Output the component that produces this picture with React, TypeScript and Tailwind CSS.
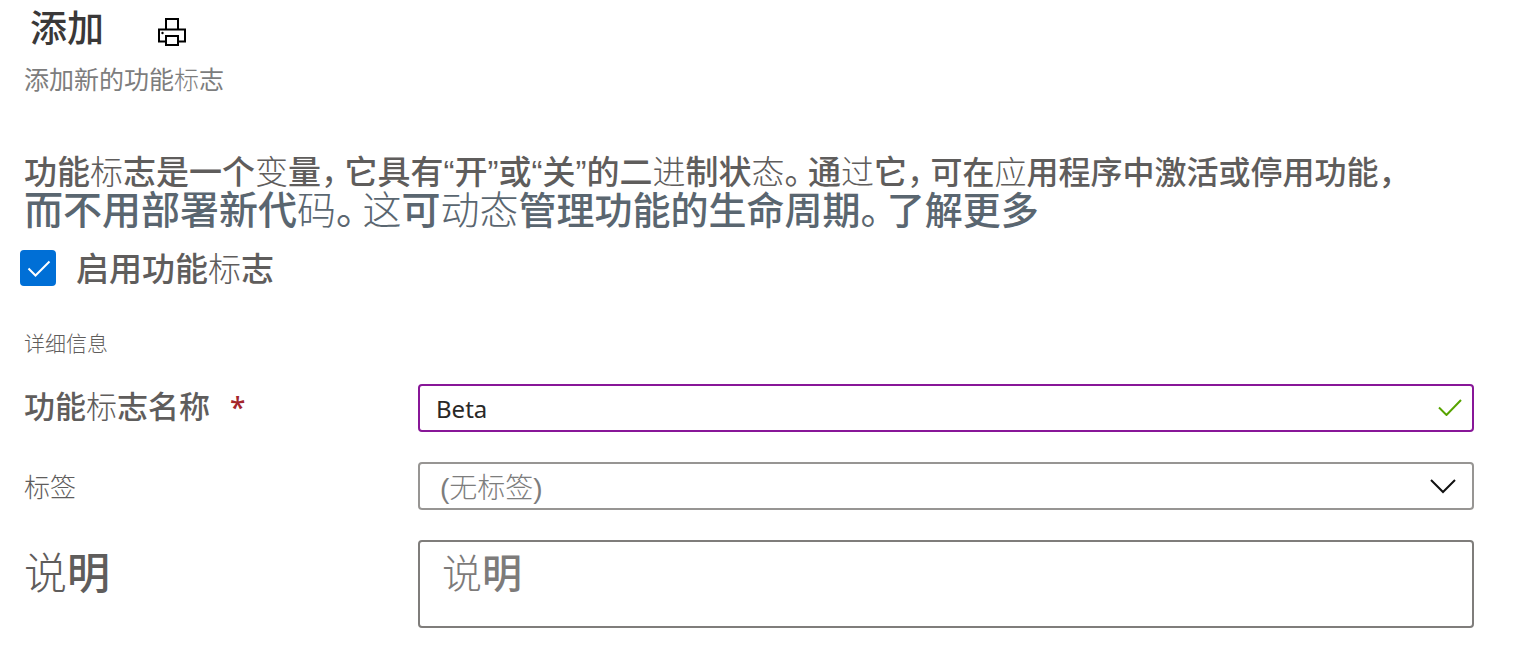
import type { ReactNode } from 'react';

const Light = ({ children }: { children: ReactNode }) => <span className="font-light">{children}</span>;

/* Full-width punctuation set tighter than the characters around it. */
const Mark = ({ children }: { children: ReactNode }) => (
  <span className="mr-[7px] font-normal [font-feature-settings:'halt']">{children}</span>
);

const PrinterIcon = () => (
  <svg viewBox="0 0 28 28" className="size-7" fill="none" stroke="#000" strokeWidth="2" aria-hidden="true">
    <path d="M8 11V1h12v10" />
    <path d="M8 23.500H1V11.500h26v12h-7" />
    <path d="M8 18h12v9H8z" />
    <circle cx="4.500" cy="15" r="1.200" fill="#000" stroke="none" />
  </svg>
);

export default function App() {
  return (
    <main className="min-h-screen bg-white pr-10 pb-6 pl-6 font-['Liberation_Sans','Noto_Sans_CJK_SC',sans-serif] font-medium text-[#5f5d5c]">
      <header>
        <div className="flex items-center gap-[54px] pl-1.5">
          <h1 className="text-[37px] leading-[60px] text-[#3a3838]">添加</h1>
          <button type="button" aria-label="打印" className="mt-1">
            <PrinterIcon />
          </button>
        </div>
        <p className="text-[25px] leading-10 font-normal text-[#7d7d7d]">
          添加新的功能<Light>标</Light>志
        </p>
      </header>

      <div className="mt-[54px]">
        <p className="text-[33px] leading-[37px]">
          功能<Light>标</Light>志是一个<Light>变</Light>量<Mark>，</Mark>它具有“开”或“关”的二<Light>进</Light>制状
          <Light>态</Light>
          <Mark>。</Mark>通<Light>过</Light>它<Mark>，</Mark>
          <span className="text-[32px]">
            可在<Light>应</Light>用程序中激活或停用功能，
          </span>
        </p>
        <p className="text-[38px] leading-[37px] text-[#5a6670]">
          <span className="text-[39px]">
            而不用部署新代<Light>码</Light>
            <Mark>。</Mark>
            <Light>这</Light>可<Light>动态</Light>
          </span>
          管理功能的生命周期<Mark>。</Mark>
          <a href="#learn-more">了解更多</a>
        </p>
      </div>

      <form>
        <div className="mt-[18px] -ml-1 flex items-center gap-5">
          <input
            id="enabled"
            type="checkbox"
            defaultChecked
            className="size-9 shrink-0 appearance-none rounded-sm border-2 border-[#006fd6] bg-white bg-center bg-no-repeat checked:bg-[#006fd6] checked:bg-[url('data:image/svg+xml,%3Csvg%20xmlns=%22http://www.w3.org/2000/svg%22%20width=%2232%22%20height=%2232%22%3E%3Cpath%20d=%22M6.500%2016.500l7%207L27.500%209.500%22%20fill=%22none%22%20stroke=%22white%22%20stroke-width=%222%22/%3E%3C/svg%3E')]"
          />
          <label htmlFor="enabled" className="pt-1 text-[33px] leading-9">
            启用功能<Light>标</Light>志
          </label>
        </div>

        <h2 className="mt-[42px] text-[21px] leading-7 font-light">详细信息</h2>

        <div className="mt-[26px] grid grid-cols-[394px_1fr] gap-y-[30px]">
          <label htmlFor="name" className="text-[31px] leading-12">
            功能<Light>标</Light>志名称
            <span className="ml-5 font-['Noto_Sans',sans-serif] text-[28px] leading-none text-[#a4262c]">*</span>
          </label>
          <div className="relative h-12">
            <input
              id="name"
              defaultValue="Beta"
              className="block h-12 w-full rounded-sm border-2 border-[#881798] px-4 font-['Noto_Sans',sans-serif] text-2xl font-normal text-[#292827] outline-none"
            />
            <svg
              viewBox="0 0 24 18"
              className="pointer-events-none absolute top-3.5 right-3 h-[18px] w-6"
              fill="none"
              stroke="#57a300"
              strokeWidth="2"
              aria-hidden="true"
            >
              <path d="M1 9.500l7.500 7.500L23 2" />
            </svg>
          </div>

          <label htmlFor="label" className="pt-1 text-[26px] leading-11 font-light">
            标签
          </label>
          <div className="relative h-12">
            <select
              id="label"
              className="block h-12 w-full appearance-none rounded-sm border-2 border-[#979593] bg-white px-5 pt-1 text-[28px] font-light text-[#7d7d7d] outline-none"
            >
              <option>(无标签)</option>
            </select>
            <svg
              viewBox="0 0 26 16"
              className="pointer-events-none absolute top-4 right-[18px] h-4 w-[26px]"
              fill="none"
              stroke="#111"
              strokeWidth="2"
              aria-hidden="true"
            >
              <path d="M1 2l12 12L25 2" />
            </svg>
          </div>

          <label htmlFor="description" className="pt-1 text-[43px] leading-15">
            <Light>说</Light>明
          </label>
          <div className="relative">
            <textarea
              id="description"
              placeholder=" "
              className="peer block h-22 w-full resize-none rounded-sm border-2 border-[#7f7d7b] px-[22px] pt-0.5 text-[40px] leading-[60px] outline-none"
            />
            <span
              aria-hidden="true"
              className="pointer-events-none absolute top-1 left-6 hidden text-[40px] leading-[60px] text-[#7d7b7a] peer-placeholder-shown:block"
            >
              <Light>说</Light>明
            </span>
          </div>
        </div>
      </form>
    </main>
  );
}
